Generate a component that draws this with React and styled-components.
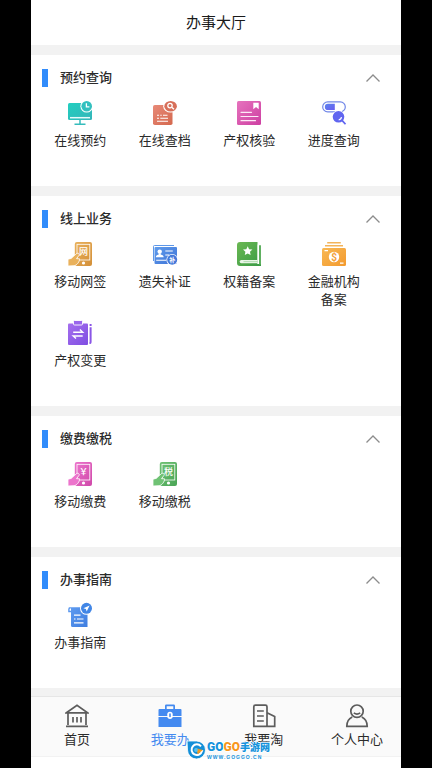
import React, { useState } from "react";
import styled, { createGlobalStyle } from "styled-components";

const GlobalStyle = createGlobalStyle`
  * {
    box-sizing: border-box;
  }
  body {
    margin: 0;
    background-color: #000;
    color: #2b2b2b;
    font-family: "Noto Sans CJK SC", "Noto Sans", sans-serif;
    font-size: 13px;
    line-height: 18px;
  }
  button {
    margin: 0;
    padding: 0;
    border: 0;
    background: none;
    color: inherit;
    font: inherit;
    cursor: pointer;
  }
`;

const cjk = '"Noto Sans CJK SC", sans-serif';

function Gradient({ id, from, to }) {
  return (
    <defs>
      <linearGradient id={id} x1="0" y1="0" x2="1" y2="1">
        <stop offset="0" stopColor={from} />
        <stop offset="1" stopColor={to} />
      </linearGradient>
    </defs>
  );
}

function MonitorIcon() {
  return (
    <Icon viewBox="0 0 24 24">
      <Gradient id="teal" from="#22cfc0" to="#35b5b9" />
      <rect y="2" width="24" height="17" rx="1.5" fill="url(#teal)" />
      <path d="M2 16.7h20" stroke="#e8fbfa" strokeWidth="1.5" />
      <path d="M12 19v4M6.5 23.2h11" stroke="#35bcbc" strokeWidth="1.5" />
      <circle cx="18.7" cy="5.3" r="6.3" fill="#fff" />
      <circle cx="18.7" cy="5.3" r="5.3" fill="#33c0bf" />
      <path d="M18.4 2.2v3.6h3" fill="none" stroke="#fff" strokeWidth="1.3" />
    </Icon>
  );
}

function ArchiveIcon() {
  return (
    <Icon viewBox="0 0 24 24">
      <Gradient id="coral" from="#e88a78" to="#d4684e" />
      <rect y="4" width="19.5" height="20" rx="1.8" fill="url(#coral)" />
      <ellipse cx="17.6" cy="5.3" rx="7.4" ry="6.3" fill="#fff" />
      <ellipse cx="17.6" cy="5.3" rx="6.3" ry="5.3" fill="#d76f59" />
      <circle cx="17" cy="4.6" r="2.2" fill="none" stroke="#fff" strokeWidth="1.3" />
      <path d="M18.7 6.2l2.3 2" stroke="#fff" strokeWidth="1.4" />
      <path d="M4 14.3h2M7.3 14.3h1.4M10 14.3h4.5M4 17.3h2M7.3 17.3h7.7M4 20.3h11" stroke="#fff" strokeWidth="1.1" />
    </Icon>
  );
}

function CertificateIcon() {
  return (
    <Icon viewBox="0 0 24 24">
      <Gradient id="pink" from="#e673bd" to="#cd3fa2" />
      <rect width="24" height="24" rx="1.5" fill="url(#pink)" />
      <path d="M16.3 1.7h5.4v6.6L19 6l-2.7 2.3z" fill="#fff" />
      <path d="M4 11.3h10.5M4 15.5h17M4 19.7h14.5" stroke="#fde9f7" strokeWidth="1.2" strokeLinecap="round" />
    </Icon>
  );
}

function ProgressIcon() {
  return (
    <Icon viewBox="0 0 24 24">
      <Gradient id="indigo" from="#5b84ee" to="#6a5cf0" />
      <rect x="0.7" y="0.9" width="22.6" height="10" rx="5" fill="none" stroke="#7187e8" strokeWidth="1.2" />
      <path d="M6 2.8h6.8v6.3H6a3.1 3.1 0 0 1 0-6.3z" fill="url(#indigo)" />
      <circle cx="16.5" cy="15.8" r="6.6" fill="#fff" />
      <circle cx="16.5" cy="15.8" r="5.8" fill="#6065f0" />
      <path d="M16.7 18.8a3.1 3.1 0 0 0 2.8-2.6" fill="none" stroke="#fff" strokeWidth="1.2" />
      <path d="M20 19.4l3.5 3.9" stroke="#6065f0" strokeWidth="1.7" />
    </Icon>
  );
}

function HandPhoneIcon({ id, from, to, glyph }) {
  return (
    <Icon viewBox="0 0 24 24">
      <Gradient id={id} from={from} to={to} />
      <rect x="6.8" width="17.2" height="24" rx="2" fill={`url(#${id})`} />
      <rect x="9" y="2.3" width="12.8" height="15.7" fill="none" stroke="#fff" strokeWidth="0.8" />
      <path
        d="M0 17.2l3.2-.8 5-4.6c1.6-1.4 3.8-.1 2.8 1.6l-2.5 3.3 3 .1c.4 2.7-2.7 6.6-5.4 6.9L0 24z"
        fill={from}
        stroke="#fff"
        strokeWidth="0.8"
      />
      <circle cx="15.5" cy="21" r="1.6" fill="#fff" />
      <text x="15.4" y="13" fill="#fff" fontSize="9" fontWeight="500" fontFamily={cjk} textAnchor="middle">
        {glyph}
      </text>
    </Icon>
  );
}

function IdCardIcon() {
  return (
    <Icon viewBox="0 0 24 24">
      <Gradient id="blue" from="#5f9cec" to="#3f73d6" />
      <path d="M0.5 19V4.3Q.5 3.5 1.5 3.5H21" fill="none" stroke="#5d97e8" />
      <rect x="1.5" y="5" width="22.5" height="17" rx="1" fill="url(#blue)" />
      <circle cx="6.7" cy="9.6" r="2.2" fill="#fff" />
      <path d="M2.8 15.2c0-2 2-2.4 2.9-2.7v-1.2h2v1.2c1 .3 3 .7 3 2.7z" fill="#fff" />
      <path d="M12.3 9h7.5M12.3 13h4M3.2 18.3h10" stroke="#fff" strokeWidth="1.1" />
      <circle cx="19.2" cy="17.8" r="5.8" fill="#fff" />
      <circle cx="19.2" cy="17.8" r="5" fill="#4478da" />
      <text x="19.2" y="20.1" fill="#fff" fontSize="6" fontWeight="700" fontFamily={cjk} textAnchor="middle">
        补
      </text>
    </Icon>
  );
}

function BookIcon() {
  return (
    <Icon viewBox="0 0 24 24">
      <Gradient id="green" from="#6bb853" to="#3a9b46" />
      <path d="M3 0h17.5v22H24v2H3a3 3 0 0 1-3-3V3a3 3 0 0 1 3-3z" fill="url(#green)" />
      <path d="M21.2 2.5V22" stroke="#fff" strokeWidth="1.2" />
      <path d="M23 3.2V23" stroke="#4ea850" strokeWidth="1.8" />
      <path d="M20.5 18H4.3a1.6 1.6 0 0 0 0 3.2h16.2z" fill="#eaf6e8" />
      <path d="M6.5 19.6h14" stroke="#9ed09c" strokeWidth="0.7" />
      <path d="M10.7 4.2l1.4 3 3.3.4-2.4 2.2.6 3.3-2.9-1.6-2.9 1.6.6-3.3L6 7.6l3.3-.4z" fill="#fff" />
    </Icon>
  );
}

function MoneyIcon() {
  return (
    <Icon viewBox="0 0 24 24">
      <Gradient id="amber" from="#f8b854" to="#f39a2e" />
      <path d="M5.2 0.8h13.6M3 3.7h18" stroke="#f3b45a" strokeWidth="1.5" />
      <rect y="6" width="24" height="18" rx="1.5" fill="url(#amber)" />
      <path d="M2.5 8.6h3.5M18 21.2h3.5" stroke="#fff" strokeWidth="1.3" />
      <circle cx="12" cy="15" r="5.2" fill="#fff" />
      <text x="12" y="18.5" fill="#f3a03a" fontSize="10" fontWeight="700" fontFamily="Roboto, sans-serif" textAnchor="middle">
        $
      </text>
    </Icon>
  );
}

function ClipboardIcon() {
  return (
    <Icon viewBox="0 0 24 24">
      <Gradient id="violet" from="#a56fee" to="#7f4ee2" />
      <rect y="2.5" width="20" height="21.5" rx="1" fill="url(#violet)" />
      <rect x="5.5" y="-0.5" width="9" height="4.5" rx="1" fill="#9a66ec" stroke="#fff" strokeWidth="0.9" />
      <path d="M5.2 11.2h9.5l-2.8-2.6M14.7 15H5.2l2.8 2.6" fill="none" stroke="#fff" strokeWidth="1.4" />
      <path d="M22.6 3v2M22.6 6.3V21l-.6 1.8" fill="none" stroke="#8a56e6" strokeWidth="2" />
    </Icon>
  );
}

function GuideIcon() {
  return (
    <Icon viewBox="0 0 24 24">
      <Gradient id="sky" from="#5e9bf0" to="#3f7ee0" />
      <path d="M3.4 8.5H.9V6.2q0-1.4 1.5-1.4" fill="none" stroke="#5b98ee" strokeWidth="1.4" />
      <path d="M2 4.2h17.5V24H4.5a1.5 1.5 0 0 1-1.5-1.5V6z" fill="url(#sky)" />
      <path d="M6 12.2h6.5M6 16h1.5M9 16h6.5M6 19.8h9.5" stroke="#fff" strokeWidth="1.2" />
      <circle cx="18.5" cy="5.3" r="6.5" fill="#fff" />
      <circle cx="18.5" cy="5.3" r="5.5" fill="#4186e6" />
      <path d="M21.6 2.4l-6.2 2.8 2.5.8.8 2.5z" fill="#fff" />
    </Icon>
  );
}

function HomeIcon() {
  return (
    <TabIcon viewBox="0 0 24 24">
      <path d="M1.4 8.8L12 1.2l10.6 7.6zM3 9v12M21 9v12M1 22.3h22M8 13v5.5M12 13v5.5M16 13v5.5" />
    </TabIcon>
  );
}

function BriefcaseIcon() {
  return (
    <TabIcon viewBox="0 0 24 24">
      <g stroke="none" fill="#448af0">
        <path d="M7 5V1.8Q7 .5 8.3.5h7.4q1.3 0 1.3 1.3V5h-1.7V2.2H8.7V5z" />
        <path d="M1.5 5h21q1 0 1 1v6H.5V6q0-1 1-1zM.5 13h23v10H.5z" />
        <path d="M12 7.8c1.8 0 2.7 1 2.7 2.5v2c0 1.8-1 2.8-2.7 2.8s-2.7-1-2.7-2.8v-2c0-1.5.9-2.5 2.7-2.5z" fill="#fff" />
        <rect x="11.2" y="9.3" width="1.6" height="4" rx="0.8" />
      </g>
    </TabIcon>
  );
}

function BuildingIcon() {
  return (
    <TabIcon viewBox="0 0 24 24">
      <path d="M15 22.3H1.8V2.8q0-1.6 1.6-1.6h10q1.6 0 1.6 1.6v19.5h7.7V12.6L15 8.7M5 7h6.8M5 12h6.8M5 17h6.8" />
    </TabIcon>
  );
}

function PersonIcon() {
  return (
    <TabIcon viewBox="0 0 24 24">
      <circle cx="12" cy="7.2" r="6.2" />
      <path d="M8.8 8.8q3.2 2.5 6.4 0M7.2 13C3.5 14.8 1.8 18.2 1.8 22.3h20.4c0-4.1-1.7-7.5-5.4-9.3" />
    </TabIcon>
  );
}

const sections = [
  {
    title: "预约查询",
    items: [
      { label: "在线预约", icon: <MonitorIcon /> },
      { label: "在线查档", icon: <ArchiveIcon /> },
      { label: "产权核验", icon: <CertificateIcon /> },
      { label: "进度查询", icon: <ProgressIcon /> },
    ],
  },
  {
    title: "线上业务",
    items: [
      { label: "移动网签", icon: <HandPhoneIcon id="sign" from="#e9b15c" to="#d38f38" glyph="网" /> },
      { label: "遗失补证", icon: <IdCardIcon /> },
      { label: "权籍备案", icon: <BookIcon /> },
      { label: "金融机构备案", icon: <MoneyIcon /> },
      { label: "产权变更", icon: <ClipboardIcon /> },
    ],
  },
  {
    title: "缴费缴税",
    items: [
      { label: "移动缴费", icon: <HandPhoneIcon id="fee" from="#ec74cc" to="#cf48a9" glyph="￥" /> },
      { label: "移动缴税", icon: <HandPhoneIcon id="tax" from="#6fc274" to="#49a455" glyph="税" /> },
    ],
  },
  {
    title: "办事指南",
    items: [{ label: "办事指南", icon: <GuideIcon /> }],
  },
];

const tabs = [
  { label: "首页", icon: <HomeIcon /> },
  { label: "我要办", icon: <BriefcaseIcon />, active: true },
  { label: "我要淘", icon: <BuildingIcon /> },
  { label: "个人中心", icon: <PersonIcon /> },
];

function Section({ title, items }) {
  const [open, setOpen] = useState(true);

  return (
    <Card>
      <CardTitle>
        <Toggle type="button" aria-expanded={open} onClick={() => setOpen(!open)}>
          <Marker />
          <TitleText>{title}</TitleText>
          <Chevron viewBox="0 0 14 8" $open={open}>
            <path d="M0.5 7.5L7 1l6.5 6.5" />
          </Chevron>
        </Toggle>
      </CardTitle>
      {open && (
        <Services>
          {items.map((item) => (
            <Service type="button" key={item.label}>
              {item.icon}
              <ServiceLabel>{item.label}</ServiceLabel>
            </Service>
          ))}
        </Services>
      )}
    </Card>
  );
}

function SiteBadge() {
  return (
    <Badge>
      <BadgeLogo viewBox="0 0 20 20">
        <path d="M1 1h9.5a9 9 0 1 1-9 9z" fill="#148fd8" stroke="#fff" strokeWidth="0.8" />
        <path d="M15 6.3a5.3 5.3 0 1 0 1 4.7h-4.5" fill="none" stroke="#fff" strokeWidth="2" />
        <path d="M10 8.3l6.8 1.8-5 4.2z" fill="#f69a1b" />
        <circle cx="10" cy="10" r="1.9" fill="#56c3f2" />
      </BadgeLogo>
      <BadgeText>
        <BadgeName>
          <Latin>GO</Latin>
          <Latin $warm>GO</Latin>
          手游网
        </BadgeName>
        <BadgeUrl>WWW.GOGGO.CN</BadgeUrl>
      </BadgeText>
    </Badge>
  );
}

function App() {
  return (
    <Page>
      <GlobalStyle />
      <Screen>
        <Header>办事大厅</Header>
        <Main>
          {sections.map((section) => (
            <Section key={section.title} {...section} />
          ))}
        </Main>
        <TabBar>
          {tabs.map((tab) => (
            <Tab type="button" key={tab.label} $active={tab.active} aria-current={tab.active ? "page" : undefined}>
              {tab.icon}
              {tab.label}
            </Tab>
          ))}
          <SiteBadge />
        </TabBar>
      </Screen>
    </Page>
  );
}

const Page = styled.div`
  min-height: 100vh;
  padding: 0 31px;
  display: flex;
`;

const Screen = styled.div`
  flex: 1;
  min-width: 0;
  display: flex;
  flex-direction: column;
  padding-bottom: 11px;
  background-color: #fff;
`;

const Header = styled.h1`
  margin: 0;
  padding: 10px 0 11px;
  font-size: 15px;
  font-weight: 400;
  line-height: 24px;
  text-align: center;
  color: #1a1a1a;
`;

const Main = styled.main`
  flex: 1;
  display: flex;
  flex-direction: column;
  gap: 10px;
  padding: 10px 0 8px;
  background-color: #f2f2f2;
`;

const Card = styled.section`
  background-color: #fff;
`;

const CardTitle = styled.h2`
  margin: 0;
  font-size: 13px;
  font-weight: 500;
`;

const Toggle = styled.button`
  width: 100%;
  height: 46px;
  padding: 0 21px 0 11px;
  display: flex;
  align-items: center;
`;

const Marker = styled.span`
  width: 6px;
  height: 18px;
  margin-right: 12px;
  background-color: #318cfb;
`;

const TitleText = styled.span`
  padding-bottom: 2px;
`;

const Chevron = styled.svg`
  width: 14px;
  height: 8px;
  margin-left: auto;
  fill: none;
  stroke: #8c8c8c;
  stroke-width: 1.3;
  transform: ${({ $open }) => ($open ? "none" : "rotate(180deg)")};
`;

const Services = styled.div`
  display: grid;
  grid-template-columns: repeat(4, 1fr);
  align-items: start;
  row-gap: 13px;
  padding: 0 25px 37px 7px;
`;

const Service = styled.button`
  display: flex;
  flex-direction: column;
  align-items: center;
  gap: 6px;
`;

const ServiceLabel = styled.span`
  max-width: 56px;
`;

const Icon = styled.svg`
  width: 24px;
  height: 24px;
  overflow: visible;
`;

const TabBar = styled.nav`
  position: relative;
  display: flex;
  justify-content: space-between;
  padding: 7px 17px 8px 19px;
  border-top: 1px solid #e6e6e6;
  border-bottom: 1px solid #f2f2f2;
  background-color: #fafafa;
`;

const Tab = styled.button`
  width: 54px;
  display: flex;
  flex-direction: column;
  align-items: center;
  gap: 2px;
  color: ${({ $active }) => ($active ? "#448af0" : "#2b2b2b")};
`;

const TabIcon = styled.svg`
  width: 24px;
  height: 24px;
  fill: none;
  stroke: #5c5c5c;
  stroke-width: 1.7;
`;

/* floats over the labels in the middle of the tab bar */
const Badge = styled.div`
  position: absolute;
  left: 155px;
  bottom: -4px;
  display: flex;
  align-items: center;
  gap: 1px;
  pointer-events: none;
`;

const BadgeLogo = styled.svg`
  width: 20px;
  height: 20px;
`;

const BadgeText = styled.div`
  display: flex;
  flex-direction: column;
  color: #1593dc;
`;

const BadgeName = styled.span`
  display: flex;
  align-items: center;
  font-size: 10px;
  font-weight: 900;
  line-height: 14px;
  text-shadow: 0 0 1px #fff, 1px 0 #fff, -1px 0 #fff, 0 1px #fff, 0 -1px #fff;
`;

const Latin = styled.span`
  font-family: "DejaVu Sans Condensed", "Liberation Sans Narrow", "Roboto", sans-serif;
  font-size: 12px;
  font-weight: 900;
  font-family: "Liberation Sans Narrow", "Roboto", sans-serif;
  color: ${({ $warm }) => ($warm ? "#f8961c" : "inherit")};
`;

const BadgeUrl = styled.span`
  font-family: "Liberation Sans", sans-serif;
  font-size: 5px;
  font-weight: 700;
  line-height: 6px;
  letter-spacing: 1px;
`;

export default App;
